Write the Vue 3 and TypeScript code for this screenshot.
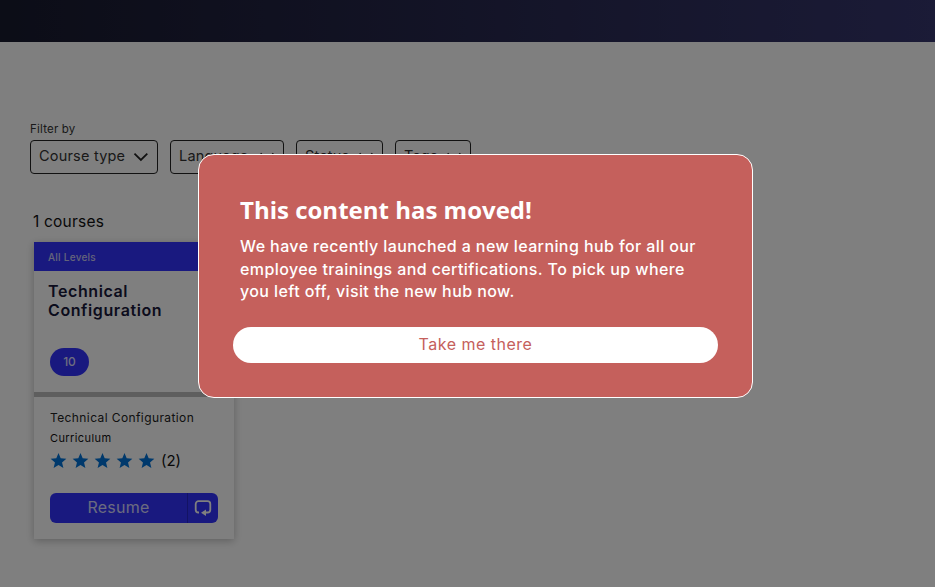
<script setup lang="ts">
const filters = ['Course type', 'Language', 'Status', 'Tags']
const stars = [1, 2, 3, 4, 5]
</script>

<template>
  <div class="page">
    <header class="topbar"></header>

    <main class="content">
      <div class="filter-label">Filter by</div>
      <div class="filters">
        <button v-for="name in filters" :key="name" class="filter">
          <span>{{ name }}</span>
          <svg class="chevron" width="16" height="10" viewBox="0 0 16 10" fill="none">
            <path d="M1.500 1.500 8 8l6.500-6.500" stroke="#222" stroke-width="1.800" />
          </svg>
        </button>
      </div>

      <div class="count">1 courses</div>

      <article class="card">
        <div class="level">All Levels</div>
        <div class="card-top">
          <h2 class="card-title">Technical Configuration</h2>
          <span class="badge">10</span>
        </div>
        <div class="divider"></div>
        <div class="card-body">
          <div class="course-name">Technical Configuration</div>
          <div class="course-type">Curriculum</div>
          <div class="rating">
            <svg v-for="s in stars" :key="s" class="star" width="17" height="17" viewBox="0 0 24 24">
              <path d="M12 1.500l3.100 7.400 8 .6-6.100 5.200 1.900 7.800L12 18.300l-6.900 4.200L7 14.700.9 9.500l8-.6z" fill="#0073d8" />
            </svg>
            <span class="rating-count">(2)</span>
          </div>
          <div class="actions">
            <button class="resume">Resume</button>
            <button class="resume-icon">
              <svg width="18" height="18" viewBox="0 0 18 18" fill="none">
                <path d="M5 13.500H4.500A2.800 2.800 0 0 1 1.700 10.700V5A2.800 2.800 0 0 1 4.500 2.200h9A2.800 2.800 0 0 1 16.300 5v5.700a2.800 2.800 0 0 1-2.800 2.800H11" stroke="#fff" stroke-width="1.800" />
                <path d="M7 13.700l5-3.200v6.400z" fill="#fff" />
              </svg>
            </button>
          </div>
        </div>
      </article>
    </main>

    <div class="overlay">
      <section class="modal">
        <h1 class="modal-title">This content has moved!</h1>
        <p class="modal-text">
          We have recently launched a new learning hub for all our<br />
          employee trainings and certifications. To pick up where<br />
          you left off, visit the new hub now.
        </p>
        <button class="modal-btn">Take me there</button>
      </section>
    </div>
  </div>
</template>

<style>
html,
body {
  margin: 0;
  background: #fff;
}
</style>

<style scoped>
.page {
  position: relative;
  width: 935px;
  height: 587px;
  overflow: hidden;
  background: #fff;
  font-family: 'Inter', 'Liberation Sans', sans-serif;
  color: #111;
}

.topbar {
  height: 42px;
  background: linear-gradient(90deg, #181a2e, #36366e);
}

.content {
  padding: 81px 0 0 30px;
}

.filter-label {
  font-size: 11.500px;
  line-height: 13px;
  letter-spacing: 0.2px;
  color: #333;
}

.filters {
  display: flex;
  gap: 12px;
  margin-top: 4px;
}

.filter {
  display: flex;
  align-items: center;
  justify-content: space-between;
  gap: 8px;
  height: 34px;
  padding: 0 8px;
  box-sizing: border-box;
  background: #fff;
  border: 1px solid #222;
  border-radius: 4px;
  font-family: inherit;
  font-size: 14.500px;
  letter-spacing: 0.2px;
  color: #333;
  white-space: nowrap;
}

.filter span {
  margin-top: -3px;
}

.filter:nth-child(1) {
  width: 128px;
}

.filter:nth-child(2) {
  width: 114px;
}

.filter:nth-child(3) {
  width: 87px;
}

.filter:nth-child(4) {
  width: 76px;
}

.count {
  margin: 38px 0 0 3px;
  font-size: 15.500px;
  line-height: 20px;
  letter-spacing: 0.2px;
  color: #111;
}

.card {
  width: 200px;
  height: 297px;
  margin: 10px 0 0 4px;
  background: #fff;
  box-shadow: 0 2px 8px rgba(0, 0, 0, 0.25);
}

.level {
  height: 29px;
  padding-left: 14px;
  background: #3333ff;
  color: #c9c9f5;
  font-size: 10px;
  font-weight: 500;
  letter-spacing: 0.25px;
  line-height: 30px;
}

.card-top {
  height: 121px;
  padding: 11px 14px 0;
  box-sizing: border-box;
}

.card-title {
  margin: 0;
  width: 130px;
  font-size: 16px;
  line-height: 19px;
  letter-spacing: 0.6px;
  font-weight: 600;
  color: #18183a;
}

.badge {
  display: block;
  width: 39px;
  height: 28px;
  margin: 28px 0 0 2px;
  border-radius: 14px;
  background: #3333ff;
  color: #dcdcff;
  font-size: 12px;
  font-weight: 500;
  line-height: 28px;
  text-align: center;
}

.divider {
  height: 5px;
  background: #bcbcbc;
}

.card-body {
  padding: 13px 16px 0;
}

.course-name {
  font-size: 12px;
  line-height: 16px;
  letter-spacing: 0.4px;
  color: #222;
}

.course-type {
  margin-top: 5px;
  font-size: 11px;
  line-height: 14px;
  letter-spacing: 0.4px;
  color: #111;
}

.rating {
  display: flex;
  align-items: center;
  gap: 5px;
  margin-top: 6px;
  height: 18px;
}

.star {
  flex: none;
}

.rating-count {
  margin-left: 1px;
  font-size: 15px;
  color: #111;
}

.actions {
  display: flex;
  height: 30px;
  margin-top: 24px;
}

.resume {
  flex: 1;
  padding: 0 0 3px;
  border: 0;
  border-right: 1px solid #2626c8;
  border-radius: 6px 0 0 6px;
  background: #3333ff;
  color: #d6d6ff;
  font-family: inherit;
  font-size: 16px;
  letter-spacing: 0.2px;
}

.resume-icon {
  display: flex;
  align-items: center;
  justify-content: center;
  width: 30px;
  padding: 0;
  border: 0;
  border-radius: 0 6px 6px 0;
  background: #3333ff;
}

.overlay {
  position: absolute;
  inset: 0;
  background: rgba(0, 0, 0, 0.5);
}

.modal {
  position: absolute;
  left: 198px;
  top: 154px;
  width: 555px;
  height: 244px;
  padding: 40px 41px 0;
  box-sizing: border-box;
  background: #c5605c;
  border: 1px solid #fff;
  border-radius: 16px;
  color: #fff;
}

.modal-title {
  margin: 0;
  font-family: 'Open Sans', 'Liberation Sans', sans-serif;
  font-size: 24px;
  line-height: 30px;
  font-weight: 700;
}

.modal-text {
  margin: 10px 0 0;
  font-size: 16px;
  line-height: 22.500px;
  letter-spacing: 0.4px;
  font-weight: 500;
  white-space: nowrap;
}

.modal-btn {
  display: block;
  width: 485px;
  height: 36px;
  margin: 24px 0 0 -7px;
  padding: 0 0 2px;
  border: 0;
  border-radius: 18px;
  background: #fff;
  color: #c5605c;
  font-family: inherit;
  font-size: 16px;
  letter-spacing: 0.5px;
}
</style>
